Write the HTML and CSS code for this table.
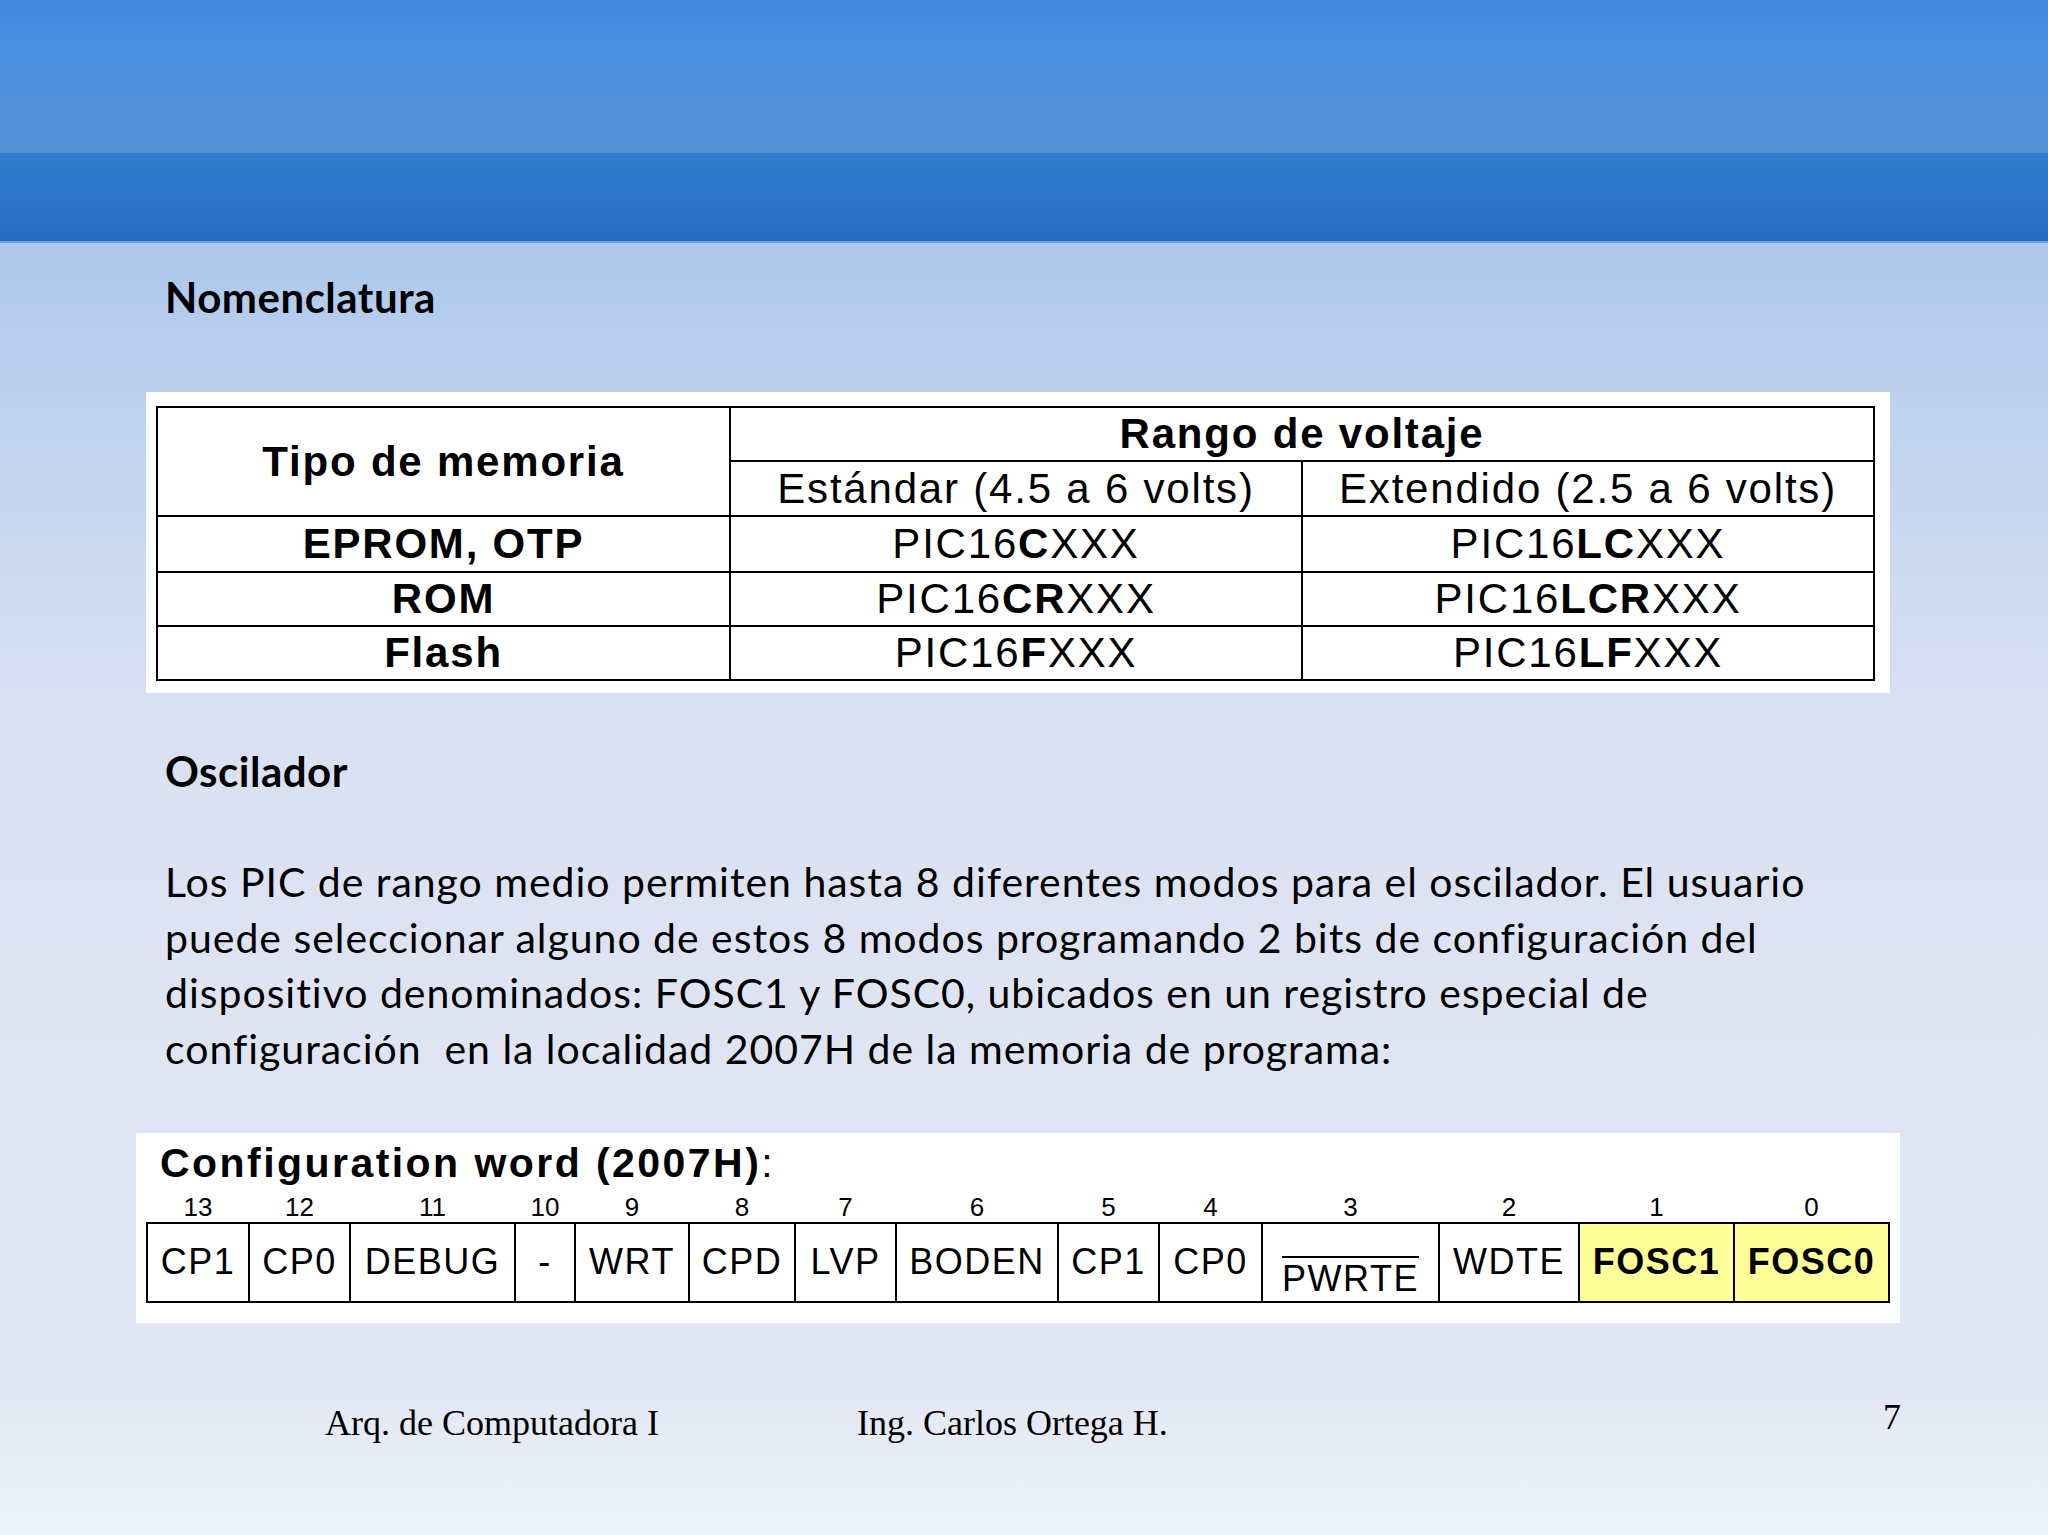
FILE: index.html
```html
<!DOCTYPE html>
<html lang="es">
<head>
<meta charset="utf-8">
<title>Nomenclatura</title>
<link rel="stylesheet" href="styles.css">
</head>
<body>
<div class="slide">
  <div class="header">
    <div class="band-top"></div>
    <div class="band-bottom"></div>
  </div>
  <div class="content">
    <h2 class="heading h-nom">Nomenclatura</h2>
    <div class="table-box">
      <div class="nom-table">
        <div class="cell bold span-rows">Tipo de memoria</div>
        <div class="cell bold span-cols">Rango de voltaje</div>
        <div class="cell">Estándar (4.5 a 6 volts)</div>
        <div class="cell">Extendido (2.5 a 6 volts)</div>
        <div class="cell bold">EPROM, OTP</div>
        <div class="cell">PIC16<b>C</b>XXX</div>
        <div class="cell">PIC16<b>LC</b>XXX</div>
        <div class="cell bold">ROM</div>
        <div class="cell">PIC16<b>CR</b>XXX</div>
        <div class="cell">PIC16<b>LCR</b>XXX</div>
        <div class="cell bold">Flash</div>
        <div class="cell">PIC16<b>F</b>XXX</div>
        <div class="cell">PIC16<b>LF</b>XXX</div>
      </div>
    </div>
    <h2 class="heading h-osc">Oscilador</h2>
    <p class="para">Los PIC de rango medio permiten hasta 8 diferentes modos para el oscilador. El usuario<br>puede seleccionar alguno de estos 8 modos programando 2 bits de configuración del<br>dispositivo denominados: FOSC1 y FOSC0, ubicados en un registro especial de<br>configuración &nbsp;en la localidad 2007H de la memoria de programa:</p>
    <div class="config-box">
      <div class="config-title">Configuration word (2007H)<span class="colon">:</span></div>
      <div class="bits bit-nums">
        <div>13</div><div>12</div><div>11</div><div>10</div><div>9</div><div>8</div><div>7</div><div>6</div><div>5</div><div>4</div><div>3</div><div>2</div><div>1</div><div>0</div>
      </div>
      <div class="bits bit-cells">
        <div class="bc">CP1</div>
        <div class="bc">CP0</div>
        <div class="bc">DEBUG</div>
        <div class="bc">-</div>
        <div class="bc">WRT</div>
        <div class="bc">CPD</div>
        <div class="bc">LVP</div>
        <div class="bc">BODEN</div>
        <div class="bc">CP1</div>
        <div class="bc">CP0</div>
        <div class="bc low"><span class="ovl">PWRTE</span></div>
        <div class="bc">WDTE</div>
        <div class="bc hl">FOSC1</div>
        <div class="bc hl">FOSC0</div>
      </div>
    </div>
    <div class="footer">
      <span class="f-left">Arq. de Computadora I</span>
      <span class="f-mid">Ing. Carlos Ortega H.</span>
      <span class="f-num">7</span>
    </div>
  </div>
</div>
</body>
</html>
```

FILE: styles.css
```css
html, body {
  margin: 0;
  padding: 0;
}
body {
  width: 2048px;
  height: 1535px;
  overflow: hidden;
  font-family: "Lato", "Open Sans", sans-serif;
  color: #000;
}
.slide {
  width: 2048px;
  height: 1535px;
  display: flex;
  flex-direction: column;
  background: linear-gradient(to bottom,
    #adc8eb 0px, #adc8eb 243px,
    #c3d4f0 450px,
    #d8e0f2 700px,
    #dfe4f3 1000px,
    #e2e7f4 1380px,
    #edf1f9 1535px);
}
.header {
  height: 243px;
  display: flex;
  flex-direction: column;
  flex-shrink: 0;
}
.band-top {
  height: 153px;
  background: linear-gradient(to bottom, #4189dd 0px, #4a90e1 48px, #4f8fdb 100px, #5590d5 153px);
}
.band-bottom {
  height: 88px;
  background: linear-gradient(to bottom, #2f7dcc 0px, #2c74c7 50px, #286bbf 88px);
  border-bottom: 2px solid #6c9fdc;
}
.content {
  display: flex;
  flex-direction: column;
  align-items: flex-start;
}
.heading {
  margin: 0;
  font-family: "Lato", "Open Sans", sans-serif;
  font-weight: 700;
  font-size: 42px;
  line-height: 48px;
  letter-spacing: 0.5px;
  padding-left: 165px;
}
.h-nom {
  margin-top: 30px;
}
.table-box {
  margin-top: 71px;
  margin-left: 146px;
  width: 1744px;
  height: 301px;
  box-sizing: border-box;
  background: #fff;
  padding: 14px 15px 0 10px;
}
.nom-table {
  display: grid;
  grid-template-columns: 571px 570px 570px;
  grid-template-rows: 52px 53px 54px 52px 52px;
  gap: 2px;
  padding: 2px;
  width: max-content;
  background: #000;
  font-family: "Liberation Sans", Arial, sans-serif;
  font-size: 42px;
  letter-spacing: 1.8px;
}
.cell {
  background: #fff;
  display: flex;
  align-items: center;
  justify-content: center;
  white-space: nowrap;
}
.cell.bold, .cell b {
  font-weight: 700;
}
.span-rows {
  grid-row: 1 / span 2;
}
.span-cols {
  grid-column: 2 / span 2;
}
.h-osc {
  margin-top: 54px;
}
.para {
  margin: 59px 0 0 0;
  padding-left: 165px;
  font-family: "Lato", "Open Sans", sans-serif;
  font-size: 41px;
  line-height: 55.7px;
  letter-spacing: 0.97px;
  white-space: nowrap;
}
.config-box {
  margin-top: 56px;
  margin-left: 136px;
  width: 1764px;
  height: 190px;
  box-sizing: border-box;
  background: #fff;
  padding: 7px 10px 0 10px;
  font-family: "Liberation Sans", Arial, sans-serif;
}
.config-title {
  font-weight: 700;
  font-size: 41px;
  line-height: 46px;
  letter-spacing: 2.45px;
  padding-left: 14px;
}
.colon {
  font-weight: 400;
}
.bits {
  display: grid;
  grid-template-columns: 100px 99px 163px 58px 112px 104px 99px 160px 99px 101px 175px 138px 153px 153px;
  column-gap: 2px;
  width: max-content;
}
.bit-nums {
  padding: 0 2px;
  font-size: 26px;
  line-height: 30px;
  margin-top: 6px;
  text-align: center;
}
.bit-cells {
  background: #000;
  padding: 2px;
  height: 81px;
  box-sizing: border-box;
  font-size: 36px;
  letter-spacing: 1.5px;
}
.bc {
  background: #fff;
  display: flex;
  align-items: center;
  justify-content: center;
  white-space: nowrap;
}
.bc.low {
  padding-top: 33px;
  box-sizing: border-box;
}
.ovl {
  text-decoration: overline;
  text-decoration-thickness: 2px;
}
.bc.hl {
  background: #ffff99;
  font-weight: 700;
}
.footer {
  margin-top: 79px;
  display: flex;
  align-items: flex-start;
  width: 2048px;
  box-sizing: border-box;
  padding: 0 147px 0 325px;
  font-family: "Liberation Serif", "Times New Roman", serif;
  font-size: 36px;
  line-height: 42px;
}
.f-mid {
  margin-left: 198px;
}
.f-num {
  margin-left: auto;
  margin-top: -6px;
}
```
